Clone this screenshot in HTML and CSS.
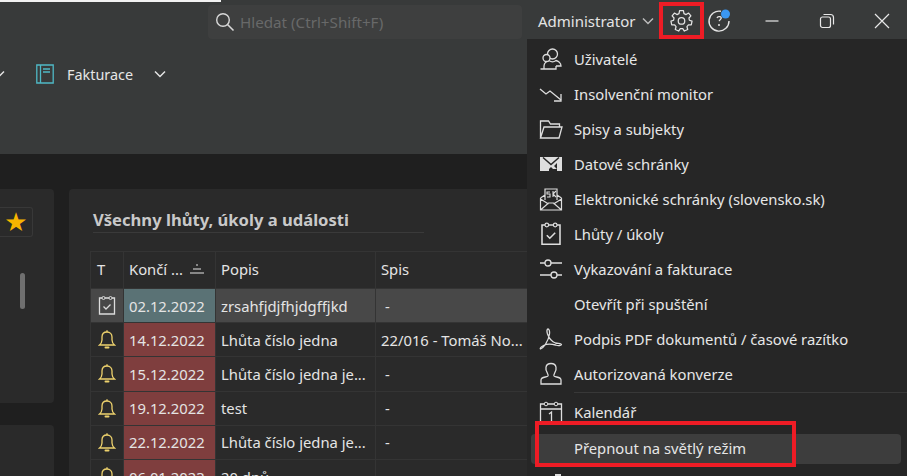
FILE: index.html
```html
<!DOCTYPE html>
<html lang="cs">
<head>
<meta charset="utf-8">
<title>Nastavení</title>
<link rel="stylesheet" href="styles.css">
</head>
<body>
<svg class="defs" width="0" height="0" aria-hidden="true">
  <symbol id="bell" viewBox="0 0 18 20"><path d="M1.500 15.500h15c-1.600-1.300-2.400-2.800-2.500-5V7.500C14 4.500 12 2.500 9 2.500S4 4.500 4 7.500v3c-.1 2.200-.9 3.700-2.500 5Z" fill="none" stroke="currentColor" stroke-width="1.300"/><path d="M9 .8v1.700" stroke="currentColor" stroke-width="1.300"/><path d="M7.500 18h3" stroke="currentColor" stroke-width="2" stroke-linecap="round"/></symbol>
  <symbol id="task" viewBox="0 0 18 20"><path d="M4 2.500H1.500v16h15v-16H14M7 2.500h4" fill="none" stroke="currentColor" stroke-width="1.300"/><circle cx="5.500" cy="2.500" r="1.500" fill="none" stroke="currentColor"/><circle cx="12.500" cy="2.500" r="1.500" fill="none" stroke="currentColor"/><path d="m5.500 11 2.500 2.500 4.500-4.500" fill="none" stroke="currentColor" stroke-width="1.300"/></symbol>
  <symbol id="chev" viewBox="0 0 12 8"><path d="m1 1.500 5 5 5-5" fill="none" stroke="currentColor" stroke-width="1.500"/></symbol>
</svg>

<header class="header">
  <div class="titlebar">
    <div class="title-strip"></div>
    <div class="search">
      <svg class="search-icon" viewBox="0 0 20 20"><circle cx="8" cy="8" r="6.300" fill="none" stroke="currentColor" stroke-width="1.400"/><path d="m12.500 12.500 6 6" stroke="currentColor" stroke-width="1.600"/></svg>
      <span>Hledat (Ctrl+Shift+F)</span>
    </div>
    <div class="user">Administrator <svg class="user-chev"><use href="#chev"/></svg></div>
    <button class="tool gear" aria-label="Nastavení">
      <svg viewBox="0 0 24 24" width="23" height="23"><path d="M10 1.800h4l.6 3 2.200 1 2.600-1.600 2.400 3-2 2.200.4 2.300 2.800 1-.8 3.800-3 .1-1.500 1.900.8 2.900-3.500 1.600-1.700-2.500h-2.600l-1.700 2.500-3.500-1.600.8-2.900-1.500-1.900-3-.1-.8-3.800 2.800-1 .4-2.300-2-2.200 2.400-3L7.200 5.800l2.200-1z" fill="none" stroke="currentColor" stroke-width="1.300" stroke-linejoin="round"/><circle cx="12" cy="12.500" r="3.400" fill="none" stroke="currentColor" stroke-width="1.300"/></svg>
    </button>
    <button class="tool help" aria-label="Nápověda">
      <svg viewBox="0 0 24 24" width="24" height="24"><path d="M14 2.300A10 10 0 1 0 22 12" fill="none" stroke="currentColor" stroke-width="1.400"/><path d="M10 9c.5-1.200 3.500-2.200 4.200-.4.500 1.400-1.800 2.200-2 3.600" fill="none" stroke="currentColor" stroke-width="1.300"/><circle cx="12" cy="16" r="1" fill="currentColor"/><circle cx="18.500" cy="5" r="4.500" fill="#3a97f2"/></svg>
    </button>
    <div class="winctl">
      <svg viewBox="0 0 16 16" width="16" height="16"><path d="M1.500 8h13" stroke="currentColor" stroke-width="1.200"/></svg>
      <svg viewBox="0 0 16 16" width="16" height="16"><rect x="1.500" y="4" width="10" height="10.500" rx="2" fill="none" stroke="currentColor" stroke-width="1.200"/><path d="M4.500 1.500h7a3 3 0 0 1 3 3v7" fill="none" stroke="currentColor" stroke-width="1.200"/></svg>
      <svg viewBox="0 0 16 16" width="16" height="16"><path d="m1 1 14 14M15 1 1 15" stroke="currentColor" stroke-width="1.200"/></svg>
    </div>
  </div>
  <nav class="nav">
    <svg class="nav-chev"><use href="#chev"/></svg>
    <svg class="book" viewBox="0 0 18 20" width="18" height="20"><path d="M.8 1h16.400v18H.8zM4.500 1v18" fill="none" stroke="#4fb9c6" stroke-width="1.300"/><path d="M7 5h7M7 8h7" stroke="#4fb9c6" stroke-width="1.300"/></svg>
    <span class="nav-label">Fakturace</span>
    <svg class="nav-chev"><use href="#chev"/></svg>
  </nav>
</header>

<main class="content">
  <aside class="side">
    <section class="card side-top">
      <div class="star-btn">★</div>
      <div class="scrollbar"></div>
    </section>
    <section class="card side-bottom"></section>
  </aside>
  <section class="card panel">
    <h2 class="panel-title">Všechny lhůty, úkoly a události</h2>
    <table class="grid">
      <colgroup><col class="c1"><col class="c2"><col class="c3"><col class="c4"></colgroup>
      <thead>
        <tr><th>T</th><th><span class="sort">Končí ... <svg class="sort-icon" viewBox="0 0 16 10"><path d="M7 1h2M4 5h8M1 9h14" stroke="currentColor" stroke-width="1.200"/></svg></span></th><th>Popis</th><th>Spis</th></tr>
      </thead>
      <tbody>
        <tr class="sel"><td class="ico"><svg class="cell-icon task-icon"><use href="#task"/></svg></td><td class="d-ok">02.12.2022</td><td>zrsahfjdjfhjdgffjkd</td><td class="dash">-</td></tr>
        <tr><td class="ico"><svg class="cell-icon"><use href="#bell"/></svg></td><td class="d-late">14.12.2022</td><td>Lhůta číslo jedna</td><td>22/016 - Tomáš No...</td></tr>
        <tr><td class="ico"><svg class="cell-icon"><use href="#bell"/></svg></td><td class="d-late">15.12.2022</td><td>Lhůta číslo jedna je...</td><td class="dash">-</td></tr>
        <tr><td class="ico"><svg class="cell-icon"><use href="#bell"/></svg></td><td class="d-late">19.12.2022</td><td>test</td><td class="dash">-</td></tr>
        <tr><td class="ico"><svg class="cell-icon"><use href="#bell"/></svg></td><td class="d-late">22.12.2022</td><td>Lhůta číslo jedna je...</td><td class="dash">-</td></tr>
        <tr><td class="ico"><svg class="cell-icon"><use href="#bell"/></svg></td><td class="d-late">06.01.2023</td><td>20 dnů</td><td class="dash">-</td></tr>
      </tbody>
    </table>
  </section>
</main>

<div class="menu">
  <div class="item"><svg viewBox="0 0 24 24"><circle cx="13.500" cy="7" r="5" fill="none" stroke="currentColor" stroke-width="1.300"/><path d="M5 22v-3c0-3 3-5 5-5.500 2 1.500 5 1.500 7 0 2 .5 5 2.500 5 5.500v0h-5M1.500 22H17v-3" fill="none" stroke="currentColor" stroke-width="1.300"/><circle cx="7.500" cy="11" r="3.500" fill="#262626" stroke="currentColor" stroke-width="1.300"/></svg><span>Uživatelé</span></div>
  <div class="item"><svg viewBox="0 0 24 24"><path d="m1 7 6 5 4-3 11 9" fill="none" stroke="currentColor" stroke-width="1.300"/><path d="M22 12v7h-7" fill="none" stroke="currentColor" stroke-width="1.300"/></svg><span>Insolvenční monitor</span></div>
  <div class="item"><svg viewBox="0 0 24 24"><path d="M1.500 21V4h8l2 3h9v3M1.500 21l3.500-11h18l-3 11z" fill="none" stroke="currentColor" stroke-width="1.300"/></svg><span>Spisy a subjekty</span></div>
  <div class="item"><svg viewBox="0 0 24 24"><path d="M1 5h22v14h-5V11l-3 3 3 3h-4l-2-2-2 2v2H1z" fill="currentColor"/><path d="M4 5.500l8 7 8-7" fill="none" stroke="#262626" stroke-width="1.500"/></svg><span>Datové schránky</span></div>
  <div class="item"><svg viewBox="0 0 24 24"><path d="M1.500 11v12h21V11M1.500 11 6 8M22.500 11 18 8M6 13V2h12v11M1.500 23l8-7h5l8 7M1.500 12l8 5M22.500 12l-8 5" fill="none" stroke="currentColor" stroke-width="1.200"/><path d="M11 5H8v2h3v3H8M14 4v6M17 4l-3 3 3 3" fill="none" stroke="currentColor" stroke-width="1.100"/></svg><span>Elektronické schránky (slovensko.sk)</span></div>
  <div class="item"><svg viewBox="0 0 18 20" class="narrow"><use href="#task"/></svg><span>Lhůty / úkoly</span></div>
  <div class="item"><svg viewBox="0 0 24 24"><path d="M1 6h5M12 6h11M1 18h11M18 18h5" stroke="currentColor" stroke-width="1.300"/><circle cx="9" cy="6" r="3" fill="none" stroke="currentColor" stroke-width="1.300"/><circle cx="15" cy="18" r="3" fill="none" stroke="currentColor" stroke-width="1.300"/></svg><span>Vykazování a fakturace</span></div>
  <div class="item"><i class="noicon"></i><span>Otevřít při spuštění</span></div>
  <div class="item"><svg viewBox="0 0 24 24"><path d="M1.500 22c3-1 8-8 9-15 .4-3-.5-5-1.500-5s-1.500 2-.5 5c1.500 4 5 8 8 9 3 .6 6 .5 6 1.500s-3 1.500-6 .5c-4-1-9-1-12 .5-2 1-4 3-3 3.500Z" fill="none" stroke="currentColor" stroke-width="1.300"/></svg><span>Podpis PDF dokumentů / časové razítko</span></div>
  <div class="item"><svg viewBox="0 0 24 24"><path d="M9 14c1-2-3-5-2-9 .5-2.500 2.500-3.500 5-3.500s4.500 1 5 3.500c1 4-3 7-2 9 1 1.500 7 .5 7 4v4H2v-4c0-3.500 6-2.500 7-4Z" fill="none" stroke="currentColor" stroke-width="1.300"/></svg><span>Autorizovaná konverze</span></div>
  <div class="sep"></div>
  <div class="item"><svg viewBox="0 0 24 24"><path d="M1.500 4h21v19h-21zM1.500 9h21" fill="none" stroke="currentColor" stroke-width="1.300"/><circle cx="7" cy="4" r="1.800" fill="#262626" stroke="currentColor"/><circle cx="17" cy="4" r="1.800" fill="#262626" stroke="currentColor"/><path d="m10 14 2.500-2v9" fill="none" stroke="currentColor" stroke-width="1.300"/></svg><span>Kalendář</span></div>
  <div class="item hover"><i class="noicon"></i><span>Přepnout na světlý režim</span></div>
  <div class="item"><svg viewBox="0 0 24 24"><path d="M16 6h6" stroke="currentColor" stroke-width="2"/></svg><span></span></div>
</div>

<div class="mark mark-gear"></div>
<div class="mark mark-theme"></div>
</body>
</html>
```
FILE: styles.css
```css
* { box-sizing: border-box; }
html, body { height: 100%; }
body {
  margin: 0;
  overflow: hidden;
  background: #1f1f1f;
  color: #e4e4e4;
  font-family: "Noto Sans", "Open Sans", "Liberation Sans", sans-serif;
  font-size: 14.8px;
  position: relative;
}
.defs { position: absolute; }

.header { height: 154px; background: #383a3a; display: flex; flex-direction: column; }
.titlebar { height: 39px; display: flex; align-items: center; padding: 2px 0 0 208px; position: relative; }
.title-strip { position: absolute; left: 0; top: 0; width: 221px; height: 1.500px; background: #f2f2f2; }
.search {
  width: 314px; height: 34px; margin-top: 2px; border-radius: 4px; background: #3e3f3f;
  display: flex; align-items: center; gap: 5px; padding-left: 7px; color: #686969; font-size: 15.200px;
}
.search-icon { width: 20px; height: 20px; color: #d8d8d8; }
.user { margin-left: 16px; width: 125px; display: flex; align-items: center; gap: 7px; font-size: 15px; white-space: nowrap; color: #e4e4e4; }
.user-chev { width: 12px; height: 8px; color: #bbb; }
.tool { border: 0; padding: 0; background: none; color: #e4e4e4; display: flex; align-items: center; justify-content: center; }
.gear { width: 34px; margin-left: 1px; }
.help { width: 24px; margin-left: 9px; }
.winctl { display: flex; gap: 39px; margin-left: 33px; color: #e8e8e8; }

.nav { flex: 1; display: flex; align-items: center; padding: 0 0 45px 0; margin-left: -7px; }
.nav .nav-chev { width: 12px; height: 8px; color: #e4e4e4; }
.book { margin-left: 31px; }
.nav-label { margin-left: 13px; font-size: 14.400px; color: #e6e6e6; }
.nav-label + .nav-chev { margin-left: 21px; }

.content { display: grid; grid-template-columns: 54px 1fr; gap: 15px; padding-top: 35px; height: 322px; }
.card { background: #2a2a2a; border-radius: 4px; }
.side { display: flex; flex-direction: column; gap: 22px; min-height: 0; }
.side-top { height: 214px; border-radius: 0 4px 4px 0; padding-top: 18px; display: flex; flex-direction: column; }
.side-bottom { flex: 1; border-radius: 0 4px 0 0; }
.star-btn {
  width: 33px; height: 30px; border: 1px solid #383838; border-left: 0; border-radius: 0 3px 3px 0;
  color: #f7b500; font-size: 26px; line-height: 28px; text-align: center; font-family: "DejaVu Sans", sans-serif;
}
.scrollbar { width: 5px; height: 36px; margin: 36px 0 0 20px; border-radius: 3px; background: #6f6f6f; }

.panel { padding: 20px 0 0 21px; border-radius: 4px 0 0 0; }
.panel-title {
  margin: 0 0 18px 3px; width: 331px; height: 24px; border-bottom: 1px solid #3a3a3a;
  font-size: 16.600px; line-height: 22px; font-weight: 700; color: #c9c9c9;
}
.grid { border-collapse: collapse; table-layout: fixed; width: 437px; font-size: 14.800px; }
.c1 { width: 33px; } .c2 { width: 92px; } .c3 { width: 160px; } .c4 { width: 152px; }
.grid th, .grid td { border: 1px solid #343434; padding: 0 5px; height: 34.200px; white-space: nowrap; overflow: hidden; text-align: left; font-weight: 400; color: #e4e4e4; }
.grid th { height: 37px; padding-bottom: 2px; }
.grid td:first-child { padding: 0; text-align: center; }
.grid th:first-child { padding: 0 0 2px 6px; }
.sort { display: flex; align-items: center; gap: 6px; }
.sort-icon { width: 16px; height: 10px; }
.cell-icon { width: 18px; height: 21px; color: #eed26d; display: block; margin: 0 auto; }
.task-icon { color: #dcdcdc; }
.sel td { background: #484848; }
.grid .d-ok { background: #5a7275; }
.grid .d-late { background: #7f3e3e; }
.grid .dash { padding-left: 9px; }

.menu { position: absolute; left: 527px; top: 39px; width: 380px; background: #262626; padding-top: 2px; color: #e6e6e6; font-size: 14.800px; }
.item { height: 35.100px; display: flex; align-items: center; gap: 11px; padding-left: 12px; }
.item svg { width: 24px; height: 24px; flex: none; color: #dedede; }
.noicon { width: 24px; flex: none; }
.sep { height: 1px; margin: 0 0 1.500px 47px; background: #383838; }
.hover { height: 30px; margin: 4px 6px 0 4px; padding: 0 0 1px 8px; border-radius: 4px; background: #3d3d3d; }

.mark { position: absolute; border: 4px solid #ee1c25; }
.mark-gear { left: 659px; top: 2px; width: 45px; height: 37px; }
.mark-theme { left: 535px; top: 421px; width: 261px; height: 46px; }
```
